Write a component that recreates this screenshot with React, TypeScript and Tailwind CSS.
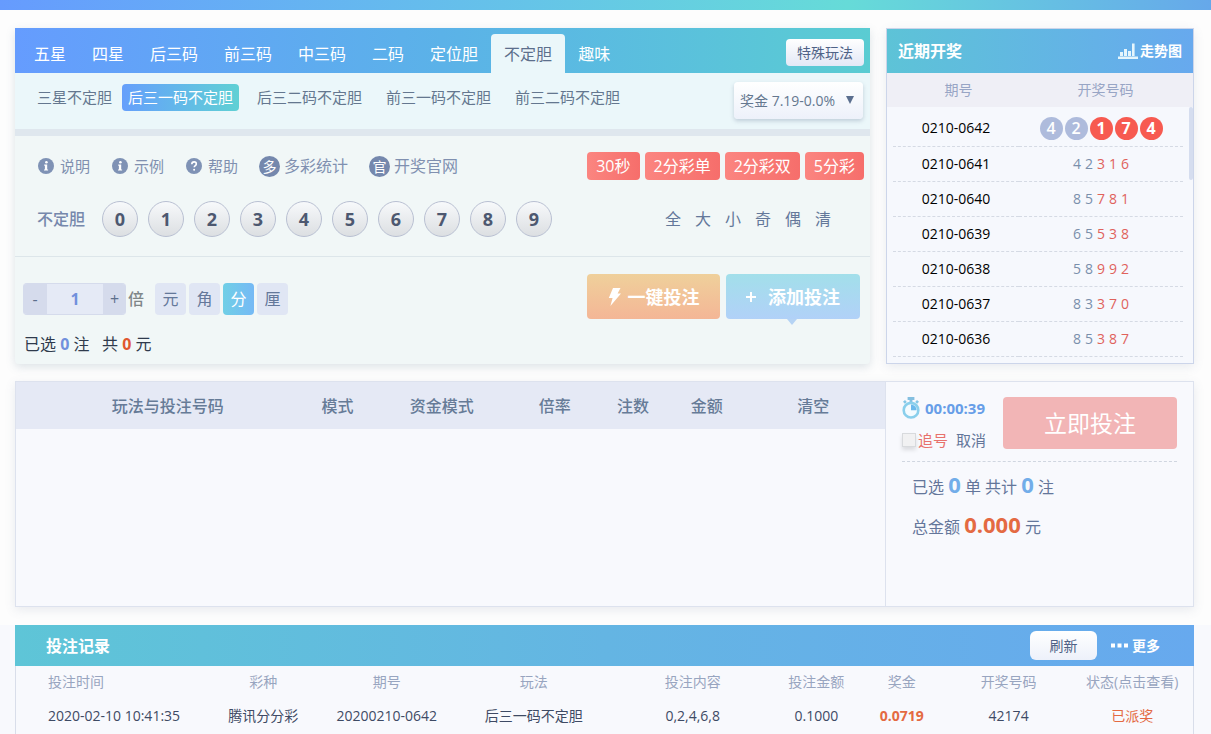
import { useState } from "react";

const tabs = ["五星", "四星", "后三码", "前三码", "中三码", "二码", "定位胆", "不定胆", "趣味"];
const subTabs = ["后三一码不定胆", "后三二码不定胆", "前三一码不定胆", "前三二码不定胆"];
const lotteries = ["30秒", "2分彩单", "2分彩双", "5分彩"];
const balls = [0, 1, 2, 3, 4, 5, 6, 7, 8, 9];
const quickPicks = ["全", "大", "小", "奇", "偶", "清"];
const units = ["元", "角", "分", "厘"];

const draws = [
  { issue: "0210-0642", code: "42174" },
  { issue: "0210-0641", code: "42316" },
  { issue: "0210-0640", code: "85781" },
  { issue: "0210-0639", code: "65538" },
  { issue: "0210-0638", code: "58992" },
  { issue: "0210-0637", code: "83370" },
  { issue: "0210-0636", code: "85387" },
];

function HelpIcon({ kind }: { kind: "info" | "question" }) {
  return (
    <svg viewBox="0 0 16 16" className="w-4 h-4" aria-hidden="true">
      <circle cx="8" cy="8" r="8" fill="#7f92b5" />
      {kind === "info" ? (
        <g fill="#fff">
          <circle cx="8.4" cy="4.2" r="1.3" />
          <path d="M6.2 6.6h3v4.8h.9v1.2H6v-1.2h.9V7.8h-.7z" />
        </g>
      ) : (
        <g>
          <path
            d="M5.8 6.2c0-1.5 1-2.3 2.3-2.3s2.2.8 2.2 2c0 1.6-2.1 1.7-2.1 3.4"
            fill="none"
            stroke="#fff"
            strokeWidth="1.6"
          />
          <circle cx="8.1" cy="11.7" r="1" fill="#fff" />
        </g>
      )}
    </svg>
  );
}

function ChartIcon() {
  return (
    <svg viewBox="0 0 20 16" className="w-5 h-4" fill="#e6f6fc" aria-hidden="true">
      <path d="M0 13.4h20V16H0zM2 9h3v4H2zM6 6h3v7H6zM10 8h3v5h-3zM14 .5h2.6V13H14z" />
    </svg>
  );
}

function TimerIcon() {
  return (
    <svg viewBox="0 0 18 22" className="w-[18px] h-[22px]" aria-hidden="true">
      <path d="M5.6 0h6.8v3h-2V5H7.6V3h-2z" fill="#84bfe0" />
      <path d="M1 4.8l2-1.8 1.8 2-2 1.8zM17 4.8l-2-1.8-1.8 2 2 1.8z" fill="#84c6e6" />
      <circle cx="9" cy="13.2" r="7.3" fill="#f4fbff" stroke="#8acfec" strokeWidth="2.6" />
      <path d="M9 13.2V7.6a5.6 5.6 0 0 1 5.6 5.6z" fill="#6bb9ec" />
    </svg>
  );
}

function BetPanel() {
  const [activeTab, setActiveTab] = useState("不定胆");
  const [activeSub, setActiveSub] = useState("后三一码不定胆");
  const [unit, setUnit] = useState("分");
  const [times, setTimes] = useState(1);

  return (
    <section className="flex-1 min-w-0 flex flex-col bg-[#f1f7f7] rounded-b shadow-[0_3px_10px_rgba(90,120,140,0.2)]">
      {/* 玩法 */}
      <nav className="h-[45px] pl-1.5 pr-1.5 flex items-end bg-linear-to-r from-[#659cfe] via-[#5bb2e8] to-[#5accd2]">
        {tabs.map((tab) => (
          <button
            key={tab}
            onClick={() => setActiveTab(tab)}
            className={
              tab === activeTab
                ? "h-[39px] px-[13px] rounded-t bg-[#ebf7fa] text-base text-[#5c6f8c]"
                : "h-[39px] px-[13px] text-base text-white"
            }
          >
            {tab}
          </button>
        ))}
        <button className="ml-auto mb-[7px] h-[27px] px-[11px] rounded bg-linear-to-b from-white to-[#e3e8f6] text-sm text-[#4f6286]">
          特殊玩法
        </button>
      </nav>

      {/* 子玩法 */}
      <div className="h-[63px] pl-[22px] pr-[7px] flex items-start border-b-[7px] border-[#dfe7ee] bg-[#ebf7fa] text-[15px] text-[#64778f]">
        <span className="mt-[11px] leading-[27px]">三星不定胆</span>
        <div className="ml-2.5 mt-[11px] flex gap-3">
          {subTabs.map((tab) => (
            <button
              key={tab}
              onClick={() => setActiveSub(tab)}
              className={
                tab === activeSub
                  ? "h-[27px] px-1.5 rounded-sm bg-linear-to-r from-[#669ffb] to-[#60d0d4] text-white"
                  : "h-[27px] px-1.5"
              }
            >
              {tab}
            </button>
          ))}
        </div>
        <div className="relative ml-auto mt-[9px]">
          <select
            aria-label="奖金"
            className="appearance-none w-[129px] h-[37px] pl-1.5 rounded bg-linear-to-b from-white to-[#edf1fa] shadow-[0_2px_4px_rgba(90,110,140,0.3)] text-sm text-[#64778f]"
          >
            <option>奖金 7.19-0.0%</option>
          </select>
          <svg viewBox="0 0 8 8" className="absolute right-[9px] top-3.5 w-2 h-2 pointer-events-none" fill="#5b6f8f">
            <path d="M0 0h8L4 8z" />
          </svg>
        </div>
      </div>

      <div className="mt-4 h-7 pl-[23px] pr-1.5 flex items-center justify-between">
        <div className="flex items-center gap-[21px] text-base text-[#8090b0]">
          <div className="flex gap-[22px] text-[15px]">
            <button className="flex items-center gap-1.5"><HelpIcon kind="info" />说明</button>
            <button className="flex items-center gap-1.5"><HelpIcon kind="info" />示例</button>
            <button className="flex items-center gap-1.5"><HelpIcon kind="question" />帮助</button>
          </div>
          <a href="#stats" className="flex items-center gap-1">
            <span className="w-[21px] h-[21px] rounded-full bg-[#7588ad] text-white text-sm leading-[21px] text-center">多</span>
            多彩统计
          </a>
          <a href="#official" className="flex items-center gap-1">
            <span className="w-[21px] h-[21px] rounded-full bg-[#7588ad] text-white text-sm leading-[21px] text-center">官</span>
            开奖官网
          </a>
        </div>
        <div className="flex gap-[5px]">
          {lotteries.map((name) => (
            <button key={name} className="h-7 px-[9px] rounded-sm bg-linear-to-r from-[#fb8580] to-[#f66e6b] text-base text-white">
              {name}
            </button>
          ))}
        </div>
      </div>

      {/* 选号 */}
      <div className="mt-[21px] h-9 pl-[22px] pr-[39px] flex items-center">
        <span className="text-base font-medium text-[#7688ac]">不定胆</span>
        <div className="ml-[17px] flex gap-2.5">
          {balls.map((n) => (
            <button
              key={n}
              className="w-9 h-9 rounded-full border border-[#b9c0d2] bg-linear-to-b from-[#f7f9fb] to-[#dcdfe2] text-lg font-bold text-[#4d5870]"
            >
              {n}
            </button>
          ))}
        </div>
        <div className="ml-auto flex gap-3.5 text-base text-[#64789a]">
          {quickPicks.map((q) => (
            <button key={q}>{q}</button>
          ))}
        </div>
      </div>

      <div className="mt-[19px] pt-[17px] pl-2 pr-2.5 flex-1 flex justify-between border-t border-[#dde6ea]">
        <div>
          <div className="mt-[9px] flex items-center">
            <div className="flex h-8 rounded-sm overflow-hidden border-y border-[#d5dbec] bg-[#e5eaf6] text-[#5c6f8c]">
              <button onClick={() => setTimes(Math.max(1, times - 1))} className="w-6 bg-[#d5dbec]">-</button>
              <input
                aria-label="倍数"
                value={times}
                onChange={(e) => setTimes(Number(e.target.value) || 1)}
                className="w-14 bg-transparent text-center text-base font-bold text-[#7190dc]"
              />
              <button onClick={() => setTimes(times + 1)} className="w-[23px] bg-[#d5dbec]">+</button>
            </div>
            <span className="ml-0.5 text-base font-medium text-[#7e8688]">倍</span>
            <div className="ml-[11px] flex gap-[3px]">
              {units.map((u) => (
                <button
                  key={u}
                  onClick={() => setUnit(u)}
                  className={
                    u === unit
                      ? "w-[31px] h-8 rounded bg-linear-to-r from-[#70cfe6] to-[#75b9f5] text-base text-white"
                      : "w-[31px] h-8 rounded bg-[#e0e6f4] text-base text-[#64789a]"
                  }
                >
                  {u}
                </button>
              ))}
            </div>
          </div>
          <p className="mt-[17px] pl-px text-base text-[#2f3a4c]">
            已选 <b className="text-[#7190dc]">0</b> 注&nbsp;&nbsp; 共 <b className="text-[#e0572f]">0</b> 元
          </p>
        </div>
        <div className="flex items-start gap-1.5 text-lg font-bold text-white">
          <button className="w-[133px] h-[45px] rounded flex items-center justify-center gap-1.5 bg-linear-to-b from-[#efd09b] to-[#f4b696]">
            <svg viewBox="0 0 14 18" className="w-3.5 h-[18px]" fill="#fff" aria-hidden="true">
              <path d="M5 0h7.5L9.6 5.6H13L2.4 18l2.2-8H.8z" />
            </svg>
            一键投注
          </button>
          <button className="relative w-[134px] h-[45px] rounded flex items-center justify-center gap-3 bg-linear-to-b from-[#a2dfea] to-[#b1d1f8]">
            <svg viewBox="0 0 10 10" className="w-2.5 h-2.5" fill="#fff" aria-hidden="true">
              <path d="M4 0h2v4h4v2H6v4H4V6H0V4h4z" />
            </svg>
            添加投注
            <svg viewBox="0 0 10 6" className="absolute top-full left-[61px] w-2.5 h-1.5" fill="#b5d3f4" aria-hidden="true">
              <path d="M0 0h10L5 6z" />
            </svg>
          </button>
        </div>
      </div>
    </section>
  );
}

function RecentDraws() {
  return (
    <section className="w-[308px] flex flex-col border border-[#ccd5ea] bg-[#f6f8fd] shadow-[0_3px_10px_rgba(90,110,140,0.12)]">
      <header className="h-11 px-[11px] flex items-center justify-between bg-linear-to-r from-[#5dc3d7] to-[#67a9ee] font-bold text-white">
        <h2 className="text-base">近期开奖</h2>
        <a href="#trend" className="flex items-center gap-0.5 text-sm">
          <ChartIcon />
          走势图
        </a>
      </header>
      <div className="relative flex-1">
        <table className="w-full table-fixed text-sm text-center">
          <thead>
            <tr className="h-[34px] bg-[#efeff6] text-[#98a5c5]">
              <th className="w-[143px] font-normal">期号</th>
              <th className="pr-3 font-normal">开奖号码</th>
            </tr>
          </thead>
        </table>
        <div className="pt-1 pl-1.5 pr-2.5">
          <table className="w-full table-fixed text-sm text-center">
            <tbody>
              {draws.map((draw, row) => (
                <tr key={draw.issue} className="h-[35px] border-b border-dashed border-[#d5dae4]">
                  <td className="w-[126px] text-black">{draw.issue}</td>
                  <td>
                    <div className={row === 0 ? "flex justify-center gap-0.5" : "flex justify-center gap-1"}>
                      {draw.code.split("").map((digit, i) =>
                        row === 0 ? (
                          <span
                            key={i}
                            className={
                              i < 2
                                ? "w-[23px] h-[23px] rounded-full bg-[#aebbdc] leading-[23px] text-base font-semibold text-white"
                                : "w-[23px] h-[23px] rounded-full bg-[#f75a50] leading-[23px] text-base font-bold text-white"
                            }
                          >
                            {digit}
                          </span>
                        ) : (
                          <span key={i} className={i < 2 ? "text-[#7a8fab]" : "text-[#e0625c]"}>{digit}</span>
                        )
                      )}
                    </div>
                  </td>
                </tr>
              ))}
            </tbody>
          </table>
        </div>
        {/* 滚动条 */}
        <div className="absolute right-0 top-[34px] w-1 h-[73px] rounded-sm bg-[#d5ddef]" />
      </div>
    </section>
  );
}

function Cart() {
  return (
    <section className="mt-[17px] h-[226px] flex border border-[#dde2ee] bg-[#f8f9fd] shadow-[0_3px_10px_rgba(90,110,140,0.13)]">
      <div className="flex-1">
        <table className="w-full table-fixed text-base text-[#667b97]">
          <thead>
            <tr className="h-[47px] bg-[#e5e9f5]">
              <th className="w-[31%] pl-[34px] font-medium">玩法与投注号码</th>
              <th className="w-[12%] font-medium">模式</th>
              <th className="w-[12%] font-medium">资金模式</th>
              <th className="w-[14%] font-medium">倍率</th>
              <th className="w-[4%] font-medium">注数</th>
              <th className="w-[13%] font-medium">金额</th>
              <th className="w-[14%] pr-[22px] font-medium">清空</th>
            </tr>
          </thead>
        </table>
      </div>
      <div className="w-[308px] pl-4 pr-4 pt-[15px] border-l border-[#dde2ee]">
        <div className="h-[65px] flex items-start justify-between border-b border-dashed border-[#d0d6e0]">
          <div className="text-[15px] text-[#64769a]">
            <div className="h-[22px] flex items-center gap-[5px] font-bold text-[#679ee8]">
              <TimerIcon />
              00:00:39
            </div>
            <div className="mt-2.5 flex items-center gap-2">
              <label className="flex items-center gap-0.5 text-[#e8716c]">
                <input
                  type="checkbox"
                  className="appearance-none w-3.5 h-3.5 border border-[#d8dadd] bg-[#f1f1f2] shadow-[0_3px_4px_rgba(0,0,0,0.12)] checked:bg-[#e8716c]"
                />
                追号
              </label>
              <button>取消</button>
            </div>
          </div>
          <button className="w-[174px] h-[52px] rounded bg-[#f2b5b6] text-[23px] text-white">立即投注</button>
        </div>
        <p className="mt-1.5 ml-2.5 h-8 leading-8 text-base text-[#64769a]">
          已选 <b className="text-[22px] leading-8 text-[#72ade9]">0</b> 单 共计{" "}
          <b className="text-[22px] leading-8 text-[#72ade9]">0</b> 注
        </p>
        <p className="mt-2 ml-2.5 h-8 leading-8 text-base text-[#64769a]">
          总金额 <b className="text-[22px] leading-8 text-[#e46a42]">0.000</b> 元
        </p>
      </div>
    </section>
  );
}

function BetRecords() {
  return (
    <section className="flex-1 flex flex-col border-x border-[#d9deea] bg-[#f8f9fd]">
      <header className="-mx-px h-[41px] pl-[31px] pr-[34px] flex items-center bg-linear-to-r from-[#5ec5d7] via-[#64b5e3] to-[#67a9ee] font-bold text-white">
        <h2 className="text-base">投注记录</h2>
        <button className="ml-auto w-[67px] h-[29px] rounded-md bg-linear-to-b from-white to-[#edf1fa] text-sm font-normal text-[#4f6286]">
          刷新
        </button>
        <a href="#more" className="ml-3.5 flex items-center gap-1 text-sm">
          <svg viewBox="0 0 17 5" className="w-[17px] h-[5px]" fill="#fff" aria-hidden="true">
            <path d="M0 .5h4v4H0zM6.5.5h4v4h-4zM13 .5h4v4h-4z" />
          </svg>
          更多
        </a>
      </header>
      <table className="w-full table-fixed text-sm text-center text-[#3e4a64]">
        <thead>
          <tr className="h-8 text-[#98a5c0]">
            <th className="w-[17%] pl-8 text-left font-normal">投注时间</th>
            <th className="w-[8%] font-normal">彩种</th>
            <th className="w-[13%] font-normal">期号</th>
            <th className="w-[12%] font-normal">玩法</th>
            <th className="w-[15%] font-normal">投注内容</th>
            <th className="w-[6%] font-normal">投注金额</th>
            <th className="w-[8%] pl-1.5 font-normal">奖金</th>
            <th className="w-[10%] pl-2 font-normal">开奖号码</th>
            <th className="w-[11%] pl-2 font-normal">状态(点击查看)</th>
          </tr>
        </thead>
        <tbody>
          <tr className="h-9">
            <td className="pl-8 text-left">2020-02-10 10:41:35</td>
            <td>腾讯分分彩</td>
            <td>20200210-0642</td>
            <td>后三一码不定胆</td>
            <td>0,2,4,6,8</td>
            <td>0.1000</td>
            <td className="pl-1.5 font-bold text-[#e46a42]">0.0719</td>
            <td className="pl-2">42174</td>
            <td className="pl-2 text-[#e46a42]">已派奖</td>
          </tr>
        </tbody>
      </table>
    </section>
  );
}

export default function App() {
  return (
    <div className="min-h-screen flex flex-col bg-[#fdfdfd] font-['Open_Sans','Noto_Sans_CJK_SC',sans-serif]">
      <div className="h-2.5 bg-linear-to-r from-[#669bfe] via-[#66dbd8] via-70% to-[#66a8ea]" />
      <main className="flex-1 flex flex-col">
        <div className="pt-[18px] pl-[15px] pr-[17px] pb-[18px]">
          <div className="h-[336px] flex gap-4">
            <BetPanel />
            <RecentDraws />
          </div>
          <Cart />
        </div>
        <div className="flex-1 flex flex-col pl-[15px] pr-[17px] bg-[#f8f9fd]">
          <BetRecords />
        </div>
      </main>
    </div>
  );
}
